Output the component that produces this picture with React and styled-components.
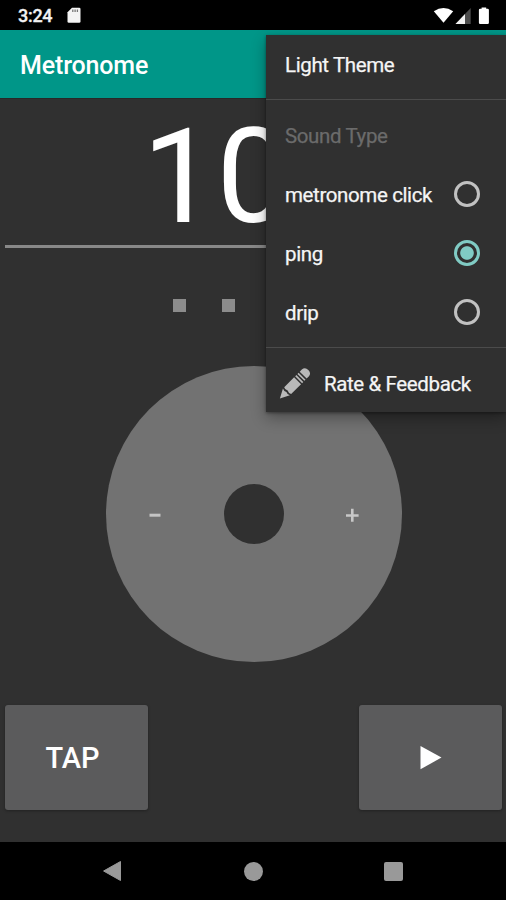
import styled, { createGlobalStyle } from "styled-components";

const sounds = ["metronome click", "ping", "drip"];
const selectedSound = "ping";

const App = () => {

    return (
    <>
        <GlobalStyle />
        <Screen>
            <StatusBar>
                <Clock>3:24</Clock>
                <SdCardIcon />
                <StatusIcons />
            </StatusBar>
            <AppBar>
                <Title>Metronome</Title>
            </AppBar>
            <Content>
                <Bpm>100</Bpm>
                <Beats>
                    <Beat />
                    <Beat />
                    <Beat />
                    <Beat />
                </Beats>
                <Dial>
                    <DialSign>
                        <svg width="14" height="14" viewBox="0 0 14 14"><path d="M1.5 7.2h11" stroke="#c4c4c4" strokeWidth="3" /></svg>
                    </DialSign>
                    <DialHole />
                    <DialSign>
                        <svg width="14" height="14" viewBox="0 0 14 14"><path d="M0 7.5h12.6M6.3.8v13" stroke="#c8c8c8" strokeWidth="2.6" /></svg>
                    </DialSign>
                </Dial>
                <Controls>
                    <Button $nudge="8px">TAP</Button>
                    <Button>
                        <svg width="24" height="24" viewBox="0 0 24 24"><path d="M1.5 0 22.5 11.6l-21 11.6z" fill="#fff" /></svg>
                    </Button>
                </Controls>
            </Content>
            <NavBar>
                <svg width="20" height="22" viewBox="0 0 20 22"><path d="M18.5 1.5v19L1.6 11z" fill="#999" stroke="#999" strokeLinejoin="round" /></svg>
                <HomeButton />
                <RecentButton />
            </NavBar>
            <Menu>
                <MenuItem>Light Theme</MenuItem>
                <Divider />
                <MenuItem $disabled>Sound Type</MenuItem>
                {sounds.map((sound) => (
                    <MenuItem key={sound}>
                        {sound}
                        <Radio $checked={sound === selectedSound} />
                    </MenuItem>
                ))}
                <Divider />
                <MenuItem $withIcon>
                    <PencilIcon />
                    Rate &amp; Feedback
                </MenuItem>
            </Menu>
        </Screen>
    </>
    )

}

const SdCardIcon = () => (
    <svg width="14" height="17" viewBox="0 0 14 17">
        <path d="M5 .8h7.2q1.3 0 1.3 1.3v12.4q0 1.3-1.3 1.3H1.8Q.5 15.8.5 14.5V5.3z" fill="#f4f4f4" />
        <path d="M5.8 2.4v2.6M8.1 2.4v2.6M10.4 2.4v2.6" stroke="#777" strokeWidth="1.3" />
    </svg>
)

const StatusIcons = () => (
    <svg width="58" height="18" viewBox="0 0 58 18">
        <path d="M.8 4.2Q10.5-2.2 20.2 4.2L10.5 15.8z" fill="#fff" />
        <path d="M37.7 1v16H22.5z" fill="#4c4c4c" />
        <path d="M32 7v10h-9.5z" fill="#f2f2f2" />
        <path d="M48.6 1.8V.6h4.6v1.2h1.5q1.2 0 1.2 1.2v12.8q0 1.2-1.2 1.2h-7.6q-1.2 0-1.2-1.2V3q0-1.2 1.2-1.2z" fill="#fff" />
    </svg>
)

const PencilIcon = () => (
    <svg width="32" height="32" viewBox="0 0 32 32">
        <g transform="translate(.9 30.4) rotate(-45)" fill="#b9b9b9">
            <path d="M0 0 9.2-4.9Q7.9-2.5 9.2 0 7.9 2.5 9.2 4.9z" />
            <path d="M11-4.9H25V4.9H11Q9.5 2.5 11 0 9.5-2.5 11-4.9z" />
            <path d="M26.5-4.9h1.7V4.9h-1.7zM29.7-4.9h1.7V4.9h-1.7z" />
            <path d="M32.9-4.9h3Q40.2-4.6 40.2 0t-4.3 4.9h-3z" />
        </g>
    </svg>
)

const GlobalStyle = createGlobalStyle`
  * {
    box-sizing: border-box;
  }
  body {
    margin: 0;
    background: #303030;
    font-family: Roboto, "Liberation Sans", sans-serif;
  }
  svg {
    display: block;
    flex: none;
  }
`

const Screen = styled.div`
  position: relative;
  display: flex;
  flex-direction: column;
  width: 506px;
  height: 900px;
  overflow: hidden;
  background: #303030;
  color: #fff;
`

const StatusBar = styled.div`
  display: flex;
  align-items: center;
  height: 30px;
  padding: 1px 15px 0 18px;
  background: #000;
  svg:last-child {
    margin-left: auto;
  }
`

const Clock = styled.span`
  width: 49px;
  font-size: 18px;
  font-weight: 500;
  letter-spacing: -0.3px;
  color: #f2f2f2;
  -webkit-text-stroke: 0.3px #f2f2f2;
`

const AppBar = styled.header`
  display: flex;
  align-items: center;
  height: 68px;
  padding: 4px 20px 0;
  background: #009688;
`

const Title = styled.h1`
  margin: 0;
  font-size: 25px;
  line-height: 30px;
  font-weight: 500;
  letter-spacing: -0.15px;
`

const Content = styled.main`
  display: flex;
  flex-direction: column;
  align-items: center;
  flex: 1;
  padding: 0 4px 0 5px;
  border-top: 1px solid #282828;
`

const Bpm = styled.div`
  width: 497px;
  height: 149px;
  border-bottom: 3px solid #888;
  font-size: 132px;
  line-height: 157px;
  text-align: center;
`

const Beats = styled.div`
  display: flex;
  gap: 36px;
  margin-top: 51px;
  padding-right: 2px;
`

const Beat = styled.div`
  width: 13px;
  height: 13px;
  background: #8c8c8c;
`

const Dial = styled.div`
  display: flex;
  align-items: center;
  justify-content: space-between;
  width: 296px;
  height: 296px;
  margin-top: 54px;
  padding: 0 42px;
  border-radius: 50%;
  background: #727272;
`

const DialSign = styled.span`
  padding-top: 2px;
`

const DialHole = styled.div`
  width: 60px;
  height: 60px;
  border-radius: 50%;
  background: #303030;
`

const Controls = styled.div`
  display: flex;
  justify-content: space-between;
  width: 497px;
  margin-top: 43px;
`

const Button = styled.button`
  display: flex;
  align-items: center;
  justify-content: center;
  width: 143px;
  height: 105px;
  padding: 0 ${({ $nudge }) => $nudge || "0"} 0 0;
  border: 0;
  border-radius: 3px;
  background: #5b5b5c;
  box-shadow: 0 1px 3px rgba(0, 0, 0, 0.3);
  color: #fff;
  font-family: inherit;
  font-size: 29px;
  font-weight: 500;
`

const NavBar = styled.nav`
  display: flex;
  align-items: center;
  justify-content: space-between;
  height: 58px;
  padding: 0 103px 0 102px;
  background: #000;
`

const HomeButton = styled.div`
  width: 19px;
  height: 19px;
  border-radius: 50%;
  background: #999;
`

const RecentButton = styled.div`
  width: 19px;
  height: 19px;
  border-radius: 2px;
  background: #999;
`

/* the overflow menu floats over the app bar and the page */
const Menu = styled.div`
  position: absolute;
  top: 35px;
  right: 0;
  width: 240px;
  height: 377px;
  background: #303030;
  box-shadow: 0 6px 14px rgba(0, 0, 0, 0.32), 0 1px 3px rgba(0, 0, 0, 0.4);
`

const MenuItem = styled.div`
  display: flex;
  align-items: center;
  justify-content: ${({ $withIcon }) => ($withIcon ? "flex-start" : "space-between")};
  gap: ${({ $withIcon }) => ($withIcon ? "13px" : "0")};
  height: 59px;
  padding: ${({ $withIcon }) => ($withIcon ? "0 0 0 13px" : "1px 26px 0 19px")};
  color: ${({ $disabled }) => ($disabled ? "#6b6b6b" : "#f5f5f5")};
  font-size: 20.5px;
  letter-spacing: -0.38px;
  white-space: nowrap;
  -webkit-text-stroke: 0.25px currentColor;
`

const Divider = styled.div`
  height: 1px;
  margin: 5px 0 6px;
  background: #4b4b4b;
`

const Radio = styled.span`
  width: 26px;
  height: 26px;
  margin-bottom: 2px;
  border: 3px solid ${({ $checked }) => ($checked ? "#80cbc4" : "#c1c1c1")};
  border-radius: 50%;
  background: ${({ $checked }) => ($checked ? "radial-gradient(circle, #80cbc4 6.3px, transparent 7.2px)" : "none")};
`

export default App
